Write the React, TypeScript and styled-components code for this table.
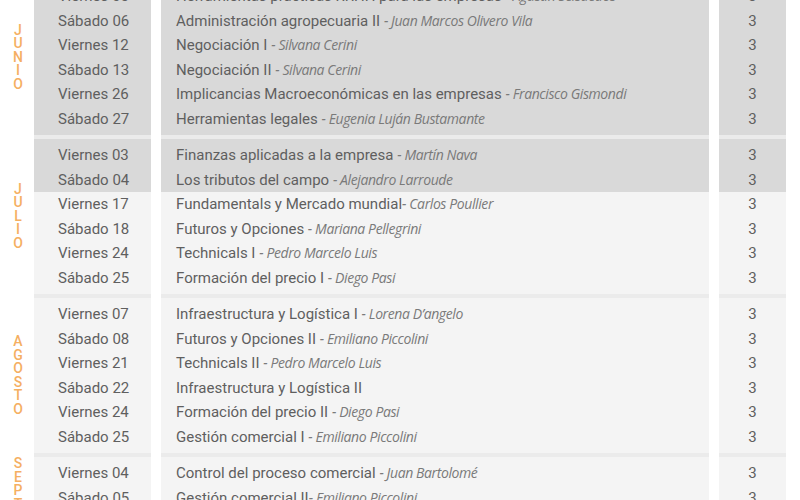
import React from "react";
import styled, { createGlobalStyle } from "styled-components";

const GlobalStyle = createGlobalStyle`
  *, *::before, *::after { box-sizing: border-box; }
  html, body { margin: 0; padding: 0; background: #ffffff; overflow: hidden; }
  body { font-family: Roboto, "Open Sans", Arial, sans-serif; }
`;

type Row = { day: string; subject: string; teacher?: string; tight?: boolean; dark?: boolean };
type Month = { name: string; rows: Row[] };

const data: Month[] = [
  {
    name: "JUNIO",
    rows: [
      { day: "Viernes 05", subject: "Herramientas prácticas RRHH para las empresas", teacher: "Agustín Seisdedos", dark: true },
      { day: "Sábado 06", subject: "Administración agropecuaria II", teacher: "Juan Marcos Olivero Vila", dark: true },
      { day: "Viernes 12", subject: "Negociación I", teacher: "Silvana Cerini", dark: true },
      { day: "Sábado 13", subject: "Negociación II", teacher: "Silvana Cerini", dark: true },
      { day: "Viernes 26", subject: "Implicancias Macroeconómicas en las empresas", teacher: "Francisco Gismondi", dark: true },
      { day: "Sábado 27", subject: "Herramientas legales", teacher: "Eugenia Luján Bustamante", dark: true },
    ],
  },
  {
    name: "JULIO",
    rows: [
      { day: "Viernes 03", subject: "Finanzas aplicadas a la empresa", teacher: "Martín Nava", dark: true },
      { day: "Sábado 04", subject: "Los tributos del campo", teacher: "Alejandro Larroude", dark: true },
      { day: "Viernes 17", subject: "Fundamentals y Mercado mundial", teacher: "Carlos Poullier", tight: true },
      { day: "Sábado 18", subject: "Futuros y Opciones", teacher: "Mariana Pellegrini" },
      { day: "Viernes 24", subject: "Technicals I", teacher: "Pedro Marcelo Luis" },
      { day: "Sábado 25", subject: "Formación del precio I", teacher: "Diego Pasi" },
    ],
  },
  {
    name: "AGOSTO",
    rows: [
      { day: "Viernes 07", subject: "Infraestructura y Logística I", teacher: "Lorena D’angelo" },
      { day: "Sábado 08", subject: "Futuros y Opciones II", teacher: "Emiliano Piccolini" },
      { day: "Viernes 21", subject: "Technicals II", teacher: "Pedro Marcelo Luis" },
      { day: "Sábado 22", subject: "Infraestructura y Logística II" },
      { day: "Viernes 24", subject: "Formación del precio II", teacher: "Diego Pasi" },
      { day: "Sábado 25", subject: "Gestión comercial I", teacher: "Emiliano Piccolini" },
    ],
  },
  {
    name: "SEPTIEMBRE",
    rows: [
      { day: "Viernes 04", subject: "Control del proceso comercial", teacher: "Juan Bartolomé" },
      { day: "Sábado 05", subject: "Gestión comercial II", teacher: "Emiliano Piccolini", tight: true },
      { day: "Viernes 18", subject: "Estrategia comercial", teacher: "Juan Bartolomé" },
      { day: "Sábado 19", subject: "Marketing agropecuario", teacher: "Emiliano Piccolini" },
      { day: "Viernes 25", subject: "Trabajo final integrador" },
    ],
  },
];

const Page = styled.div`
  margin-top: -24px;
  display: flex;
  flex-direction: column;
`;

const MonthBlock = styled.section`
  display: flex;
  align-items: stretch;
`;

const MonthLabel = styled.div`
  width: 34px;
  flex: none;
  display: flex;
  flex-direction: column;
  align-items: center;
  justify-content: center;
  padding: 4px 0 0 2px;
  color: #f5af62;
  font-family: Roboto, Arial, sans-serif;
  font-weight: 500;
  font-size: 14px;
  line-height: 13.5px;
`;

const Column = styled.div<{ $width: number; $gap?: boolean }>`
  width: ${(p) => p.$width}px;
  flex: none;
  margin-left: ${(p) => (p.$gap ? 10 : 0)}px;
  border-top: 4px solid #ebebeb;
  display: flex;
  flex-direction: column;
`;

const Cell = styled.div<{ $dark?: boolean; $align?: "left" | "center"; $pad: number }>`
  height: 24.5px;
  line-height: 24.5px;
  background: ${(p) => (p.$dark ? "#d9d9d9" : "#f4f4f4")};
  color: #5f5f5f;
  font-family: Roboto, Arial, sans-serif;
  font-size: 15px;
  white-space: nowrap;
  text-align: ${(p) => p.$align ?? "left"};
  padding-left: ${(p) => p.$pad}px;
  &:first-child { height: 28.5px; padding-top: 4px; }
  &:last-child { height: 28.5px; padding-bottom: 4px; }
`;

const Teacher = styled.span`
  font-family: "Open Sans", Roboto, sans-serif;
  font-style: italic;
  font-size: 14px;
  letter-spacing: -0.4px;
  color: #7a7a7a;
`;

export default function App() {
  return (
    <>
      <GlobalStyle />
      <Page>
        {data.map((m) => (
          <MonthBlock key={m.name}>
            <MonthLabel>
              {m.name.split("").map((ch, i) => (
                <span key={i}>{ch}</span>
              ))}
            </MonthLabel>
            <Column $width={117}>
              {m.rows.map((r, i) => (
                <Cell key={i} $dark={r.dark} $pad={24}>
                  {r.day}
                </Cell>
              ))}
            </Column>
            <Column $width={548} $gap>
              {m.rows.map((r, i) => (
                <Cell key={i} $dark={r.dark} $pad={15}>
                  {r.subject}
                  {r.teacher ? (
                    <>
                      {r.tight ? "" : " "}
                      <Teacher>- {r.teacher}</Teacher>
                    </>
                  ) : null}
                </Cell>
              ))}
            </Column>
            <Column $width={67} $gap>
              {m.rows.map((r, i) => (
                <Cell key={i} $dark={r.dark} $align="center" $pad={0}>
                  3
                </Cell>
              ))}
            </Column>
          </MonthBlock>
        ))}
      </Page>
    </>
  );
}
